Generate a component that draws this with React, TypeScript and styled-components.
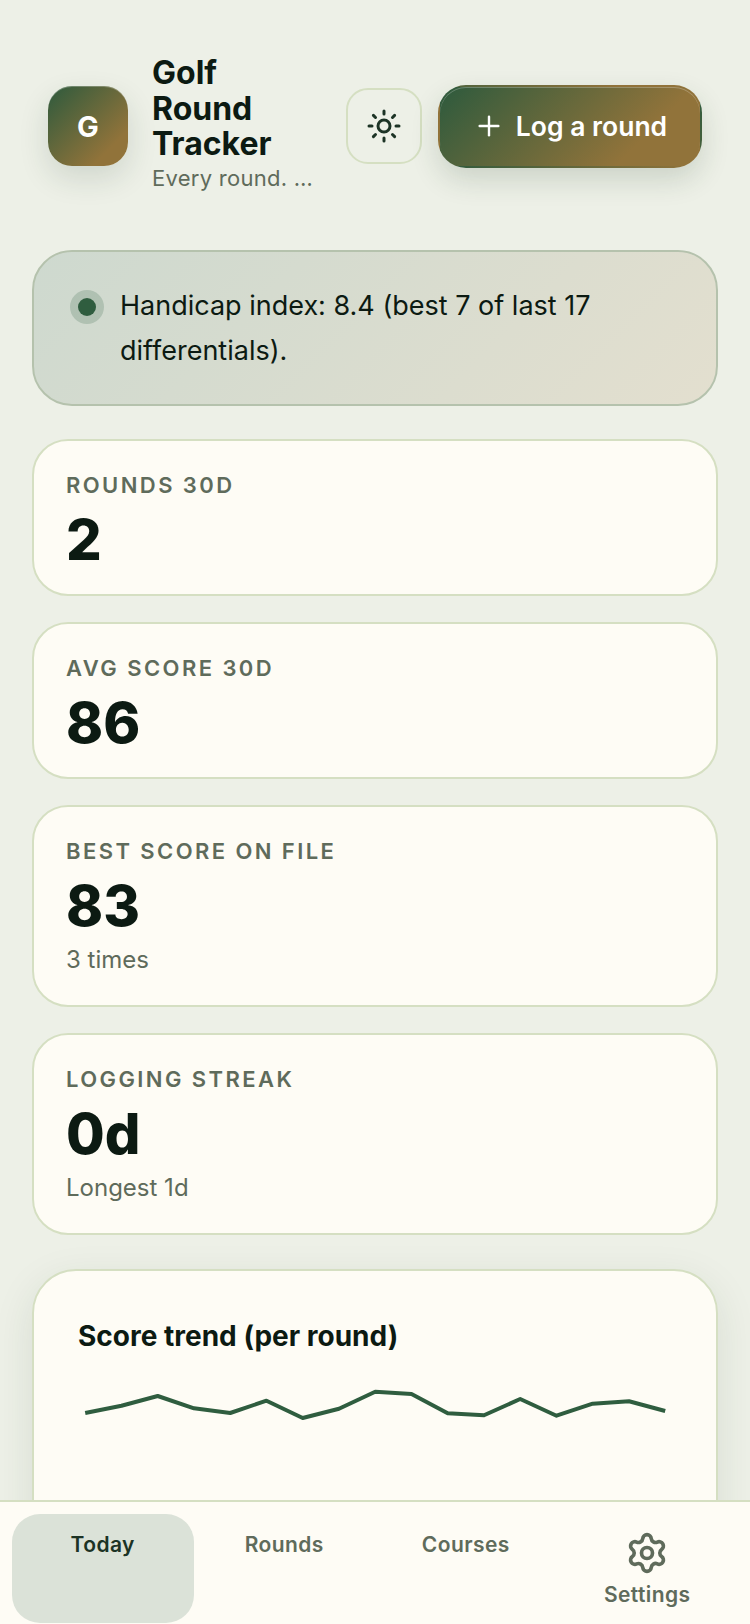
import { Plus, Settings, Sun } from 'lucide-react'
import styled, { createGlobalStyle } from 'styled-components'

const GlobalStyle = createGlobalStyle`
	html,
	body {
		margin: 0;
		padding: 0;
		background: #edf0e7;
		font-family: Inter, 'Liberation Sans', sans-serif;
		color: #0c1a12;
	}
	* {
		box-sizing: border-box;
	}
`

const stats = [
	{ label: 'Rounds 30d', value: '2' },
	{ label: 'Avg score 30d', value: '86' },
	{ label: 'Best score on file', value: '83', note: '3 times' },
	{ label: 'Logging streak', value: '0d', note: 'Longest 1d' },
]

const trend = [
	[7.2, 49], [43.5, 41.7], [79.7, 32], [116, 44.3], [152.2, 49], [188.5, 36.7], [224.7, 54], [261, 44.7], [297.2, 27.7],
	[333.5, 30], [369.7, 49.3], [406, 51.3], [442.2, 35], [478.5, 51.7], [514.7, 39.7], [551, 37.3], [587.2, 47],
]

const tabs = ['Today', 'Rounds', 'Courses']

export default function App() {
	return (
		<Shell>
			<GlobalStyle />
			<Content>
				<Header>
					<Avatar>G</Avatar>
					<Brand>
						<Title>Golf Round Tracker</Title>
						<Tagline>Every round. …</Tagline>
					</Brand>
					<ThemeButton aria-label="Toggle theme">
						<Sun size={36} strokeWidth={2} />
					</ThemeButton>
					<LogButton>
						<Plus size={32} strokeWidth={1.8} />
						Log a round
					</LogButton>
				</Header>

				<Notice>
					<NoticeDot />
					<NoticeText>Handicap index: 8.4 (best 7 of last 17 differentials).</NoticeText>
				</Notice>

				<Stats>
					{stats.map((stat) => (
						<StatCard key={stat.label}>
							<StatLabel>{stat.label}</StatLabel>
							<StatValue>{stat.value}</StatValue>
							{stat.note && <StatNote>{stat.note}</StatNote>}
						</StatCard>
					))}
				</Stats>

				<ChartCard>
					<ChartTitle>Score trend (per round)</ChartTitle>
					<TrendSvg viewBox="0 0 594 200" aria-hidden="true">
						<polyline
							points={trend.map((p) => p.join(',')).join(' ')}
							fill="none"
							stroke="#2f5d3f"
							strokeWidth="4"
							strokeLinejoin="round"
						/>
					</TrendSvg>
				</ChartCard>
			</Content>

			<TabBar>
				{tabs.map((tab, i) => (
					<Tab key={tab} $active={i === 0}>
						{tab}
					</Tab>
				))}
				<Tab>
					<GearIcon size={44} strokeWidth={2} />
					<SettingsLabel>Settings</SettingsLabel>
				</Tab>
			</TabBar>
		</Shell>
	)
}

const Shell = styled.div`
	display: flex;
	flex-direction: column;
	width: 100%;
	height: 100vh;
	overflow: hidden;
`

const Content = styled.main`
	flex: 1;
	min-height: 0;
	overflow: hidden;
	padding: 54px 32px 0;
`

const Header = styled.header`
	display: flex;
	align-items: center;
	height: 144px;
	padding: 0 16px;
`

const Avatar = styled.div`
	flex: none;
	display: flex;
	align-items: center;
	justify-content: center;
	width: 80px;
	height: 80px;
	border-radius: 24px;
	background: linear-gradient(135deg, #2d5a3d, #91733a 78%);
	box-shadow: inset 0 1px 0 rgba(255, 255, 255, 0.25), 0 12px 30px rgba(30, 60, 40, 0.14);
	color: #fff;
	font-size: 29px;
	font-weight: 700;
`

const Brand = styled.div`
	flex: none;
	width: 170px;
	margin-left: 24px;
	padding-bottom: 3px;
`

const Title = styled.h1`
	margin: 0;
	font-size: 32px;
	font-weight: 700;
	line-height: 35.5px;
	color: #0c1a12;
`

const Tagline = styled.p`
	margin: 1px 0 0;
	font-size: 22px;
	line-height: 31px;
	letter-spacing: 0.012em;
	color: #5f6b5b;
	white-space: nowrap;
`

const ThemeButton = styled.button`
	flex: none;
	display: flex;
	align-items: center;
	justify-content: center;
	width: 76px;
	height: 76px;
	margin-left: 24px;
	padding: 0;
	border: 2px solid #d5dfc2;
	border-radius: 22px;
	background: transparent;
	color: #1c3325;
`

const LogButton = styled.button`
	flex: none;
	display: flex;
	align-items: center;
	justify-content: center;
	gap: 11px;
	width: 264px;
	height: 83px;
	margin: 0 -16px 0 16px;
	border: 2px solid transparent;
	border-radius: 28px;
	background: linear-gradient(135deg, #2d5a3d, #91733a 75%);
	box-shadow: inset 0 1px 0 rgba(255, 255, 255, 0.25), 0 12px 28px rgba(30, 60, 40, 0.16);
	color: #fff;
	font-family: inherit;
	font-size: 26.5px;
	font-weight: 600;
`

const Notice = styled.section`
	display: flex;
	align-items: flex-start;
	gap: 24px;
	height: 156px;
	margin-top: 52px;
	padding: 32px 44px;
	border: 2px solid #b5c2ad;
	border-radius: 40px;
	background: linear-gradient(135deg, #ced9cf, #e3dfcf);
`

const NoticeDot = styled.span`
	flex: none;
	width: 18px;
	height: 18px;
	margin-top: 14px;
	border-radius: 50%;
	background: #2f5d3f;
	box-shadow: 0 0 0 8px rgba(47, 93, 63, 0.2);
`

const NoticeText = styled.p`
	margin: 0;
	font-size: 27px;
	line-height: 44.5px;
	color: #0c1a12;
`

const Stats = styled.div`
	display: flex;
	flex-direction: column;
	gap: 25.6px;
	margin-top: 33px;
`

const StatCard = styled.article`
	padding: 31px 32px 22.4px;
	border: 2px solid #d5dfc2;
	border-radius: 36px;
	background: #fefcf5;
`

const StatLabel = styled.div`
	font-size: 22px;
	font-weight: 600;
	line-height: 26px;
	letter-spacing: 0.11em;
	text-transform: uppercase;
	color: #5f6b5b;
`

const StatValue = styled.div`
	margin-top: 10px;
	font-size: 56px;
	font-weight: 800;
	line-height: 64px;
	color: #0c1a12;
`

const StatNote = styled.div`
	margin: 3px 0 3.6px;
	font-size: 24px;
	line-height: 38.4px;
	color: #5f6b5b;
`

const ChartCard = styled.section`
	height: 420px;
	margin-top: 33.6px;
	padding: 47px 44px;
	border: 2px solid #d5dfc2;
	border-radius: 44px;
	background: #fefcf5;
	box-shadow: 0 12px 40px rgba(30, 60, 40, 0.1);
`

const ChartTitle = styled.h2`
	margin: 0;
	font-size: 28px;
	font-weight: 700;
	line-height: 36px;
	color: #0c1a12;
`

const TrendSvg = styled.svg`
	display: block;
	width: 100%;
	margin-top: 10px;
`

const TabBar = styled.nav`
	flex: none;
	display: grid;
	grid-template-columns: repeat(4, 1fr);
	height: 124px;
	padding: 12px 12px 1px;
	border-top: 2px solid #d5dfc2;
	background: #fefcf5;
`

const Tab = styled.div<{ $active?: boolean }>`
	display: flex;
	flex-direction: column;
	align-items: center;
	padding-top: 16px;
	border-radius: 28px;
	background: ${({ $active }) => ($active ? '#dbe2d8' : 'transparent')};
	color: ${({ $active }) => ($active ? '#1c3325' : '#5f6b5b')};
	font-size: 21px;
	font-weight: 600;
	line-height: 30px;
	letter-spacing: 0.02em;
`

const GearIcon = styled(Settings)`
	margin-top: 1px;
`

const SettingsLabel = styled.span`
	margin-top: 5px;
`
